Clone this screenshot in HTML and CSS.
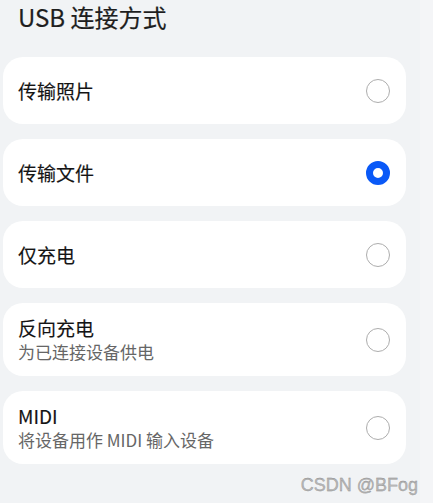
FILE: index.html
```html
<!DOCTYPE html>
<html lang="zh-CN">

<head>
    <meta charset="UTF-8">
    <meta name="viewport" content="width=device-width, initial-scale=1.0">
    <title>USB 连接方式</title>
    <link rel="stylesheet" href="styles.css">
</head>

<body>
    <div class="page">
        <h1 class="page-title">USB 连接方式</h1>

        <div class="option-list">
            <div class="option">
                <div class="option-text">
                    <div class="option-name">传输照片</div>
                </div>
                <span class="radio"></span>
            </div>

            <div class="option">
                <div class="option-text">
                    <div class="option-name">传输文件</div>
                </div>
                <span class="radio checked"></span>
            </div>

            <div class="option">
                <div class="option-text">
                    <div class="option-name">仅充电</div>
                </div>
                <span class="radio"></span>
            </div>

            <div class="option">
                <div class="option-text">
                    <div class="option-name">反向充电</div>
                    <div class="option-desc">为已连接设备供电</div>
                </div>
                <span class="radio"></span>
            </div>

            <div class="option">
                <div class="option-text">
                    <div class="option-name">MIDI</div>
                    <div class="option-desc">将设备用作 MIDI 输入设备</div>
                </div>
                <span class="radio"></span>
            </div>
        </div>

        <div class="watermark">CSDN @BFog</div>
    </div>
</body>

</html>
```

FILE: styles.css
```css
body {
    margin: 0;
    font-family: 'Noto Sans CJK SC', sans-serif;
    background: linear-gradient(to right, #f1f3f5 420px, #f4f5f7 420px);
    color: #1b1b1b;
}

.page {
    width: 420px;
    height: 503px;
    box-sizing: border-box;
}

.page-title {
    margin: 0 0 25px;
    padding: 2px 0 0 18px;
    font-size: 24px;
    line-height: 30px;
    font-weight: 400;
    color: #1e1e1e;
    -webkit-text-stroke: 0.2px #1e1e1e;
}

.option-list {
    display: flex;
    flex-direction: column;
    gap: 15px;
    margin-left: 3px;
    width: 403px;
}

.option {
    display: flex;
    align-items: center;
    min-height: 67px;
    box-sizing: border-box;
    padding: 13px 16px 13px 15px;
    background-color: #fff;
    border-radius: 20px;
}

.option-text {
    flex: 1;
}

.option-name {
    font-size: 19px;
    line-height: 24px;
    font-weight: 400;
    color: #141414;
    -webkit-text-stroke: 0.15px #141414;
}

.option-desc {
    font-size: 17px;
    line-height: 23px;
    color: #666;
}

.radio {
    width: 24px;
    height: 24px;
    box-sizing: border-box;
    border: 1.5px solid #adadad;
    border-radius: 50%;
}

.radio.checked {
    border: 7px solid #0a59f7;
}

.watermark {
    margin-top: 11px;
    padding-right: 2px;
    text-align: right;
    font-family: 'Liberation Sans', sans-serif;
    font-size: 18px;
    color: #b8b8b8;
    -webkit-text-stroke: 0.3px #888;
}
```
